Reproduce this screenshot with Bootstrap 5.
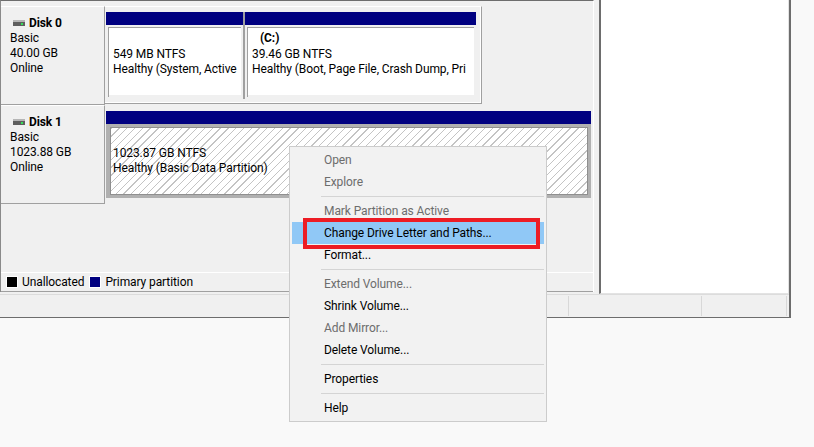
<!DOCTYPE html>
<html lang="en"><head><meta charset="utf-8"><title>Disk Management</title>
<link rel="stylesheet" href="https://cdn.jsdelivr.net/npm/bootstrap@5.3.0/dist/css/bootstrap.min.css">
<style>
html,body{height:447px;overflow:hidden;background:#f9f9f9}
body{font:12px/15px Roboto,"Noto Sans",sans-serif;letter-spacing:-.1px;color:#000;position:relative}
.win{width:791px;height:318px;background:#f0f0f0;border-right:2px solid #6d6d6d;border-bottom:1px solid #6d6d6d}
.mainrow{height:294px}
.leftp{width:596px;border-top:1px solid #6d6d6d;border-left:1px solid #8a8a8a;border-right:1px solid #fff;height:292px}
.splitgap{width:5px}
.rightp{width:188px;height:293px;background:#fff;border-left:2px solid #6d6d6d;border-right:1px solid #e3e3e3;border-bottom:1px solid #e3e3e3;box-sizing:content-box}
.disks{height:271px;padding-top:5px}
.diskrow{height:99px}
.disklabel{width:104px;height:99px;padding:9px 0 0 9px;border-top:1px solid #fff;border-right:1px solid #a0a0a0;border-bottom:1px solid #a0a0a0}
.disklabel b{font-weight:700;display:flex;align-items:center;gap:4px;margin-left:3px}
.parts{padding:6px 0 0 1px}
.d0parts{width:377px;height:98px;padding-top:5px;border-top:1px solid #fff;border-right:1px solid #a0a0a0;border-bottom:1px solid #a0a0a0;box-shadow:inset -1px -1px 0 #fff}
.part{height:87px;border-right:2px solid #a0a0a0;background:#f0f0f0}
.part:last-child{border-right:0}
.partsys{width:139px}
.partc{width:231px}
.navy{height:13px;background:#000080}
.navywide{width:485px}
.pbody{margin:2px 2px 0 2px;height:70px;background:#fff;border-top:1px solid #a0a0a0;border-left:1px solid #a0a0a0;padding:3px 0 0 4px;overflow:hidden;white-space:nowrap;box-shadow:inset 0 -2px 0 #f0f0f0}
.pname{display:block;height:16px;line-height:15px;margin-left:8px;font-weight:700}
.hatchbox{width:485px;height:74px;background:#b0b0b0;padding:3px 3px 3px 4px}
.hatch{height:100%;background:repeating-linear-gradient(135deg,#c4c4c4 0 1px,#fff 1px 5.5px);padding:3px 0 0 2px;border:1px solid #8f8f8f}
.legend{height:20px;border-top:1px solid #fff;border-bottom:1px solid #a0a0a0;padding-left:5px}
.swatch{width:12px;height:12px;border:1px solid #fff;display:inline-block}
.swatch2{background:#000080;margin-left:1px}
.status{height:23px;border-top:1px solid #dcdcdc}
.cell{border-right:1px solid #d8d8d8;margin:1px 0;height:20px}
.cell1{width:569px}.cell2{width:133px}.cell3{width:85px}
.ctx{position:absolute;left:289px;top:146px;width:258px;height:276px;background:#f2f2f2;border:1px solid #ccc;padding:2px}
.it{height:22px;line-height:23px;padding-left:32px;white-space:nowrap}
.off{color:#6d6d6d}
.sep{height:1px;background:#d4d4d4;margin:3px 0 3px 29px}
.sel{background:#90c8f6;position:relative}
.redbox{position:absolute;left:11px;top:-4px;width:237px;height:31px;border:4px solid #ed1c24}
</style></head><body>
<div class="win">
 <div class="mainrow d-flex">
  <div class="leftp d-flex flex-column">
   <div class="disks flex-grow-0">
    <div class="diskrow d-flex">
     <div class="disklabel flex-shrink-0"><b><svg width="12" height="7" viewBox="0 0 12 7"><rect y="1" width="12" height="5" fill="#5e5e5e"/><rect y="0" width="12" height="2" fill="#b5b5b5"/><rect x="8" y="3" width="2" height="2" fill="#33e05a"/></svg>Disk 0</b>Basic<br>40.00 GB<br>Online</div>
     <div class="parts d0parts d-flex flex-shrink-0">
      <div class="part partsys"><div class="navy"></div><div class="pbody"><span class="pname"></span>549 MB NTFS<br>Healthy (System, Active</div></div>
      <div class="part partc"><div class="navy"></div><div class="pbody"><span class="pname">(C:)</span>39.46 GB NTFS<br>Healthy (Boot, Page File, Crash Dump, Pri</div></div>
     </div>
    </div>
    <div class="diskrow d-flex">
     <div class="disklabel flex-shrink-0"><b><svg width="12" height="7" viewBox="0 0 12 7"><rect y="1" width="12" height="5" fill="#5e5e5e"/><rect y="0" width="12" height="2" fill="#b5b5b5"/><rect x="8" y="3" width="2" height="2" fill="#33e05a"/></svg>Disk 1</b>Basic<br>1023.88 GB<br>Online</div>
     <div class="parts flex-grow-1">
      <div class="navy navywide"></div>
      <div class="hatchbox"><div class="hatch"><br>1023.87 GB NTFS<br>Healthy (Basic Data Partition)</div></div>
     </div>
    </div>
   </div>
   <div class="flex-grow-1"></div>
   <div class="legend d-flex align-items-center gap-1">
    <span class="swatch bg-black"></span><span>Unallocated</span>
    <span class="swatch swatch2"></span><span>Primary partition</span>
   </div>
  </div>
  <div class="splitgap"></div>
  <div class="rightp"></div>
 </div>
 <div class="status d-flex">
  <div class="cell cell1"></div><div class="cell cell2"></div><div class="cell cell3"></div>
 </div>
</div>
<div class="ctx">
 <div class="it off">Open</div><div class="it off">Explore</div><div class="sep"></div>
 <div class="it off">Mark Partition as Active</div>
 <div class="it sel">Change Drive Letter and Paths...<span class="redbox"></span></div>
 <div class="it">Format...</div><div class="sep"></div>
 <div class="it off">Extend Volume...</div><div class="it">Shrink Volume...</div><div class="it off">Add Mirror...</div><div class="it">Delete Volume...</div><div class="sep"></div>
 <div class="it">Properties</div><div class="sep"></div><div class="it">Help</div>
</div>
</body></html>
